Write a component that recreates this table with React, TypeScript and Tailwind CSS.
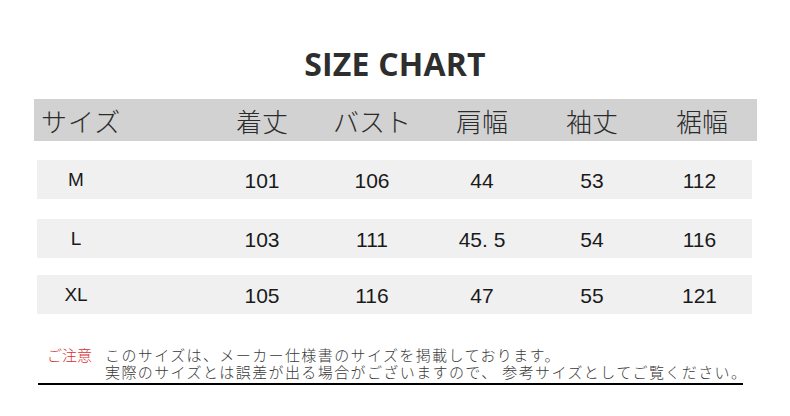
import React from "react";

const jp = "font-['Noto_Sans_CJK_JP','Noto_Sans',sans-serif]";

const headers = ["着丈", "バスト", "肩幅", "袖丈", "裾幅"];

const rows = [
  { size: "M", values: ["101", "106", "44", "53", "112"], cls: "mt-[19px]" },
  { size: "L", values: ["103", "111", "45. 5", "54", "116"], cls: "mt-[20px]" },
  { size: "XL", values: ["105", "116", "47", "55", "121"], cls: "mt-[17px]" },
];

export default function App() {
  return (
    <div className="w-[790px] h-[416px] bg-white overflow-hidden relative">
      <h1 className="pt-[46px] h-[99px] text-center font-['Open_Sans',sans-serif] font-bold text-[32px] leading-[36px] text-[#2e2e2e] tracking-[0.2px]">
        SIZE CHART
      </h1>

      <div
        className={`ml-[34px] w-[723px] h-[42px] bg-[#d2d2d2] grid grid-cols-[173px_110px_110px_110px_110px_1fr] items-center text-[26px] font-light text-[#2b2b2b] ${jp}`}
      >
        <div className="pl-[7px] tracking-[1px]">サイズ</div>
        {headers.map((h) => (
          <div key={h} className="text-center">
            {h}
          </div>
        ))}
      </div>

      {rows.map((r) => (
        <div
          key={r.size}
          className={`ml-[37px] w-[715px] h-[39px] bg-[#f0f0f1] grid grid-cols-[78px_92px_110px_110px_110px_110px_1fr] items-center text-[#1a1a1a] font-['Liberation_Sans',Arial,sans-serif] ${r.cls}`}
        >
          <div className="text-center text-[19px] pt-[2px]">{r.size}</div>
          <div />
          {r.values.map((v, i) => (
            <div key={i} className="text-center text-[21px] pt-[3px]">
              {v}
            </div>
          ))}
        </div>
      ))}

      <div className={`mt-[33px] ml-[38px] w-[705px] border-b-2 border-black pb-[3px] text-[15px] leading-[16px] ${jp}`}>
        <div className="flex">
          <div className="w-[67px] shrink-0 pl-[9px] text-[#d8302e] font-light">ご注意</div>
          <div className="flex flex-col gap-[1px] text-[#3a3a3a] font-light tracking-[1.4px] whitespace-nowrap">
            <span>このサイズは、メーカー仕様書のサイズを掲載しております。</span>
            <span>実際のサイズとは誤差が出る場合がございますので、 参考サイズとしてご覧ください。</span>
          </div>
        </div>
      </div>
    </div>
  );
}
